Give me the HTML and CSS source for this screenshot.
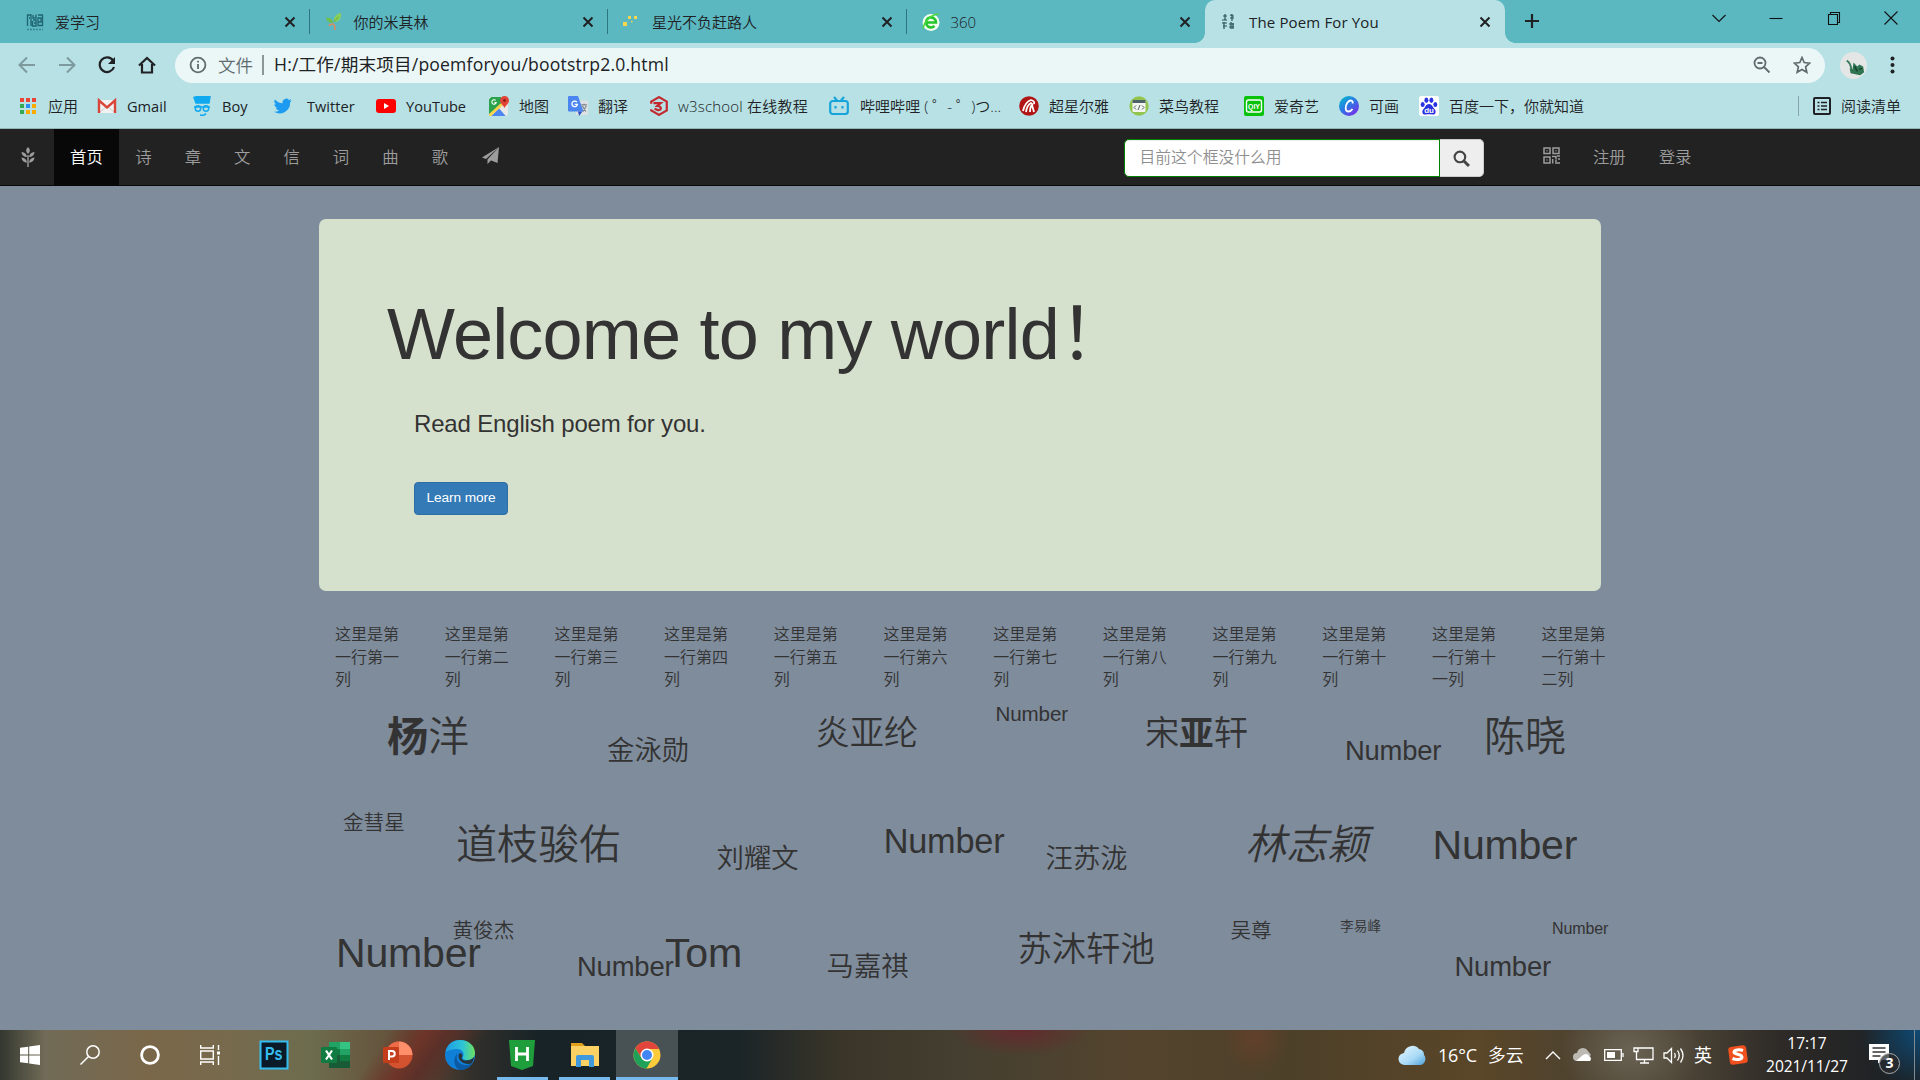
FILE: index.html
```html
<!DOCTYPE html>
<html lang="zh-CN">
<head>
<meta charset="utf-8">
<title>The Poem For You</title>
<link rel="stylesheet" href="styles.css">
</head>
<body>
<header class="tabs">
  <div class="tab"><svg class="fav" viewBox="0 0 18 18" fill="none" stroke="#1f6470" stroke-width="1.3"><path d="M1.500 13V2H5v11M3 5h1M7 2v3h3V1.500M7 7h3v6H6.500V8M8 10h2M12 2h4.500v10.500H12V5h3v4h-3"/><path d="M1 16.500h16" stroke-dasharray="2 1" opacity=".6"/></svg><span>爱学习</span><svg class="close" viewBox="0 0 12 12"><path d="M1.500 1.500l9 9M10.500 1.500l-9 9"/></svg></div>
  <div class="tab"><svg class="fav" viewBox="0 0 18 20"><path d="M9 10C8 4 12 1 17 0c0 6-2 10-8 10z" fill="#8bd05a"/><path d="M8 11C7 6 4 5 0 5c1 4 3 6 8 6z" fill="#6cbf4d"/><path d="M3 14c5-3 7-3 7 5" fill="none" stroke="#e08a5e" stroke-width="1.800"/><path d="M9 10l5-6" stroke="#5aa83c"/></svg><span>你的米其林</span><svg class="close" viewBox="0 0 12 12"><path d="M1.500 1.500l9 9M10.500 1.500l-9 9"/></svg></div>
  <div class="tab"><svg class="fav" viewBox="0 0 18 18" fill="#f6d64a"><path d="M0 9h4v4H0zM5 3h3v3H5zM11 3h3v3h-3zM8 8h1.500v1.500H8z"/></svg><span>星光不负赶路人</span><svg class="close" viewBox="0 0 12 12"><path d="M1.500 1.500l9 9M10.500 1.500l-9 9"/></svg></div>
  <div class="tab last"><svg class="fav" viewBox="0 0 18 18"><circle cx="9" cy="9.500" r="8.500" fill="#f2fff0"/><path d="M4 9.500h10a5 5 0 1 0-1.500 3.500" fill="none" stroke="#25c52b" stroke-width="2.600"/><path d="M1 16C2 9 9 1 17 1" fill="none" stroke="#4ad83c" stroke-width="1.500"/></svg><span>360</span><svg class="close" viewBox="0 0 12 12"><path d="M1.500 1.500l9 9M10.500 1.500l-9 9"/></svg></div>
  <div class="tab active"><svg class="fav" viewBox="0 0 18 18" fill="none" stroke="#2a5358" stroke-width="1.200"><path d="M3 3h4M5 1v6M2 7h5M10 2l4 1M10 5h4M12 1v7M2 10h5M4 9v7M3 13h4M9 11h5M11 9v7M9 14h5M13 10v6"/></svg><span>The Poem For You</span><svg class="close" viewBox="0 0 12 12"><path d="M1.500 1.500l9 9M10.500 1.500l-9 9"/></svg></div>
  <svg class="plus" viewBox="0 0 16 16"><path d="M8 1v14M1 8h14"/></svg>
  <div class="winctl">
    <svg viewBox="0 0 14 14"><path d="M.5 4l6.500 6.500L13.500 4"/></svg>
    <svg viewBox="0 0 14 14"><path d="M.5 7.500h13"/></svg>
    <svg viewBox="0 0 14 14"><path d="M1.500 3.500h9v10h-9zM3.500 3.500v-2h9v10h-2"/></svg>
    <svg viewBox="0 0 14 14"><path d="M.5.5l13 13M13.500.5l-13 13"/></svg>
  </div>
</header>

<div class="toolbar">
  <svg class="tool dim" viewBox="0 0 18 18"><path d="M17 9H2M9 1.500L1.500 9 9 16.500"/></svg>
  <svg class="tool dim" viewBox="0 0 18 18"><path d="M1 9h15M9 1.500L16.500 9 9 16.500"/></svg>
  <svg class="tool" viewBox="0 0 18 18"><path d="M15 4.500A7.300 7.300 0 1 0 16 11" stroke-width="2.200"/><path d="M17 1v7h-7z" fill="#202124" stroke="none"/></svg>
  <svg class="tool" viewBox="0 0 18 18"><path d="M1 9.500L9 2l8 7.500M4 8v8.500h10V8" stroke-width="2.200"/></svg>
  <div class="omnibox">
    <svg class="info" viewBox="0 0 18 18" fill="none" stroke="#5f6b6e" stroke-width="1.800"><circle cx="9" cy="9" r="7.400"/><path d="M9 8v5M9 4.800v1.800"/></svg>
    <span class="scheme">文件</span>
    <span class="url">H:/工作/期末项目/poemforyou/bootstrp2.0.html</span>
    <svg class="mag" viewBox="0 0 18 18" fill="none" stroke="#5f6b6e" stroke-width="1.800"><circle cx="7" cy="7" r="5.500"/><path d="M11 11l5.500 5.500M4.500 7h5"/></svg>
    <svg class="star" viewBox="0 0 18 18" fill="none" stroke="#5f6b6e" stroke-width="1.700"><path d="M9 1.500l2.200 5 5.500.6-4.100 3.700 1.200 5.500L9 13.500l-4.800 2.800 1.200-5.500L1.300 7.100l5.500-.6z"/></svg>
  </div>
  <svg class="avatar" viewBox="0 0 28 28"><circle cx="14" cy="14" r="14" fill="#e4e6e5"/><path d="M7 9q4 2 5 10" fill="none" stroke="#3c7a5c" stroke-width="2"/><path d="M11 22l-1-5 3 1 1-7 4 4 2-2 4 2 1 6-4 3z" fill="#2f7553"/><path d="M15 15l3 5M20 18l3-1" stroke="#163f2c" stroke-width="1.500"/></svg>
  <svg class="dots" viewBox="0 0 4 18" fill="#202124"><circle cx="2" cy="2.500" r="2"/><circle cx="2" cy="9" r="2"/><circle cx="2" cy="15.500" r="2"/></svg>
</div>

<div class="bookmarks">
  <div class="bm"><svg viewBox="0 0 18 18"><path d="M1 1h4v4H1zM7 1h4v4H7zM13 1h4v4h-4z" fill="#ea4335"/><path d="M1 7h4v4H1zM1 13h4v4H1z" fill="#34a853"/><path d="M7 7h4v4H7z" fill="#2a8cf4"/><path d="M13 7h4v4h-4zM7 13h4v4H7zM13 13h4v4h-4z" fill="#f9ab00"/></svg><span>应用</span></div>
  <div class="bm g"><svg viewBox="0 0 20 18"><path d="M1 3h18v13H1z" fill="#f1f1f1"/><path d="M3 15l6-5M17 15l-6-5" stroke="#ccc"/><path d="M2 16V3.500l8 7 8-7V16" fill="none" stroke="#d9453a" stroke-width="2.400"/></svg><span>Gmail</span></div>
  <div class="bm boy"><svg viewBox="0 0 18 20" fill="none" stroke="#10a9f0" stroke-width="1.500"><path d="M1 1.500Q8-1 17 .500L16 7H3z" fill="#10a9f0"/><path d="M1 11h16"/><circle cx="5" cy="12.500" r="2.700"/><circle cx="13" cy="12.500" r="2.700"/><path d="M7 19q4 1 6-1.500"/></svg><span>Boy</span></div>
  <div class="bm t"><svg viewBox="0 0 24 24" fill="#1d9bf0"><path d="M23.600 4.600a9.700 9.700 0 0 1-2.800.8 4.900 4.900 0 0 0 2.200-2.700 9.800 9.800 0 0 1-3.100 1.200 4.900 4.900 0 0 0-8.400 4.500A14 14 0 0 1 1.300 3.200a4.900 4.900 0 0 0 1.500 6.600 4.900 4.900 0 0 1-2.200-.6 4.900 4.900 0 0 0 4 4.900 5 5 0 0 1-2.300.1 4.900 4.900 0 0 0 4.600 3.400A9.900 9.900 0 0 1 0 19.600a14 14 0 0 0 21.500-12.400 10 10 0 0 0 2.100-2.600z"/></svg><span>Twitter</span></div>
  <div class="bm y"><svg viewBox="0 0 20 18"><rect y="2" width="20" height="14" rx="3" fill="#f00"/><path d="M8 6l5 3-5 3z" fill="#fff"/></svg><span>YouTube</span></div>
  <div class="bm"><svg viewBox="0 0 18 18"><rect x="0" y="1" width="17" height="17" rx="2" fill="#e8e8e8"/><path d="M0 18V3l2-2h9v6z" fill="#2ba24c"/><path d="M2 18l7-7 6 7z" fill="#4b86f0"/><path d="M0 18L13 6" stroke="#fbd34b" stroke-width="2.500"/><path d="M14 11c-1-3-4-4-4-7a4 4 0 0 1 8 0c0 3-3 4-4 7z" fill="#e04437"/><circle cx="14" cy="4" r="1.300" fill="#8d1b15"/><path d="M6 4a2 2 0 1 0 .5 2H4.800" fill="none" stroke="#fff"/></svg><span>地图</span></div>
  <div class="bm"><svg viewBox="0 0 18 18"><rect x="7" y="4" width="11" height="13" rx="1" fill="#dde1e4"/><path d="M0 1q0-1 1-1h8l5 14H1q-1 0-1-1z" fill="#4b86f0"/><path d="M9 14h4l-3 4z" fill="#2b4fbb"/><path d="M8 5.500a2.500 2.500 0 1 0 .5 2H6" fill="none" stroke="#fff" stroke-width="1.200"/><path d="M12 8h5M14.500 7v1M13 9l3 5M16.500 9l-3 5" stroke="#78838a" fill="none"/></svg><span>翻译</span></div>
  <div class="bm"><svg viewBox="0 0 18 18" fill="none" stroke="#c4292f" stroke-width="2"><path d="M2 7V5l7-4 7 4v8l-7 4-7-4v-1M4 6.500h6.500L7.500 9c4.500 0 4 4.500 0 3.500L5 11.500"/></svg><span class="w3">w3school 在线教程</span></div>
  <div class="bm b"><svg viewBox="0 0 20 20" fill="none" stroke="#16a4da" stroke-width="2.200"><rect x="1.200" y="5" width="17.600" height="13" rx="2.500"/><path d="M5 1l3 3.500M15 1l-3 3.500M6.500 10v2.500M13.500 10v2.500"/></svg><span>哔哩哔哩 ( ゜- ゜)つ...</span></div>
  <div class="bm"><svg viewBox="0 0 20 20"><circle cx="10" cy="10" r="9.800" fill="#b01414"/><path d="M4 15Q6 6 12 4q4 1 3 4M7 16q1-7 5-9l2 2M11 16q0-5 2-7l2 7" fill="none" stroke="#fff" stroke-width="1.800"/></svg><span>超星尔雅</span></div>
  <div class="bm"><svg viewBox="0 0 20 20"><circle cx="10" cy="10" r="9.700" fill="#93c54e"/><rect x="3.500" y="4" width="13" height="12" rx="1" fill="#f3f5ee"/><path d="M3.500 4h13v3h-13z" fill="#4c6268"/><path d="M7 9.500L5 11.500l2 2M13 9.500l2 2-2 2M11 9l-2 5" fill="none" stroke="#4c6268"/></svg><span>菜鸟教程</span></div>
  <div class="bm"><svg viewBox="0 0 20 20"><rect width="20" height="20" rx="2" fill="#08c20b"/><rect x="2.500" y="4" width="15" height="12" rx="2" fill="none" stroke="#fff" stroke-width="1.400"/><text x="4" y="13" font-size="8" font-weight="700" fill="#fff" textLength="12" lengthAdjust="spacingAndGlyphs">QIY</text></svg><span>爱奇艺</span></div>
  <div class="bm"><svg viewBox="0 0 20 20"><defs><linearGradient id="cv" x2=".8" y2="1"><stop stop-color="#00c4cc"/><stop offset=".5" stop-color="#2a78e4"/><stop offset="1" stop-color="#7d2ae8"/></linearGradient></defs><circle cx="10" cy="10" r="10" fill="url(#cv)"/><path d="M13.500 7.500C14.500 4 11 3.500 8.500 6.500c-2.500 3.500-2.500 9 .5 9 2 .2 3.500-1 4.500-2.500" fill="none" stroke="#fff" stroke-width="1.800"/></svg><span>可画</span></div>
  <div class="bm"><svg viewBox="0 0 20 20"><rect width="20" height="20" rx="2" fill="#fff"/><g fill="#2932e1"><ellipse cx="3.700" cy="8.500" rx="2" ry="2.500"/><ellipse cx="7.400" cy="4.300" rx="2" ry="2.700"/><ellipse cx="12.400" cy="4.300" rx="2" ry="2.700"/><ellipse cx="16.300" cy="8.500" rx="2" ry="2.500"/><path d="M10 8c3 0 3.500 3 5.500 5s1.500 6-2 5.500c-3-.5-4-.5-7 0-3.500.5-4-3.500-2-5.500S7 8 10 8z"/></g><text x="5.200" y="17" font-size="8" font-weight="700" fill="#fff">du</text></svg><span>百度一下，你就知道</span></div>
  <div class="bm list"><svg viewBox="0 0 18 18" fill="none" stroke="#202124" stroke-width="2"><rect x="1" y="1" width="16" height="16" rx="1"/><path d="M4.500 5.500h2M8 5.500h6M4.500 9h2M8 9h6M4.500 12.500h2M8 12.500h6" stroke-width="1.600"/></svg><span>阅读清单</span></div>
</div>

<nav class="navbar">
  <a class="brand"><svg viewBox="0 0 14 20" fill="#9d9d9d"><path d="M7 0c2.500 2.500 2.500 4.500 0 7-2.500-2.500-2.500-4.500 0-7zM.5 5c3.500.5 5 2 5.500 5C3 10 .8 8.500.5 5zM13.500 5C10 5.500 8.500 7 8 10c3 0 5.200-1.500 5.500-5zM.5 10.500c3.500.5 5 2 5.500 5-3 0-5.200-1.500-5.500-5zM13.500 10.500c-3.500.5-5 2-5.500 5 3 0 5.200-1.500 5.500-5zM6.300 8h1.400v12H6.300z"/></svg></a>
  <a class="item on">首页</a><a class="item">诗</a><a class="item">章</a><a class="item">文</a><a class="item">信</a><a class="item">词</a><a class="item">曲</a><a class="item">歌</a>
  <a class="item"><svg class="plane" viewBox="0 0 17 17" fill="#9d9d9d"><path d="M17 0L0 10.500l4 1.500zM17 0L5.500 12.500V17l3-3zM17 0L8 13l7.500 3z"/></svg></a>
  <form class="search"><input type="text" placeholder="目前这个框没什么用"><button type="button"><svg viewBox="0 0 16 16" fill="none" stroke="#444"><circle cx="6.500" cy="6.500" r="5" stroke-width="2"/><path d="M10.300 10.300L15 15" stroke-width="2.800"/></svg></button></form>
  <a class="item qr"><svg viewBox="0 0 17 17" fill="none" stroke="#9d9d9d" stroke-width="1.500"><path d="M1 1h6v5.500H1zM10 1h6v5.500h-6zM1 10h6v6H1zM3.500 3.700h1M12.500 3.700h1M3.500 13h1M9 9.500h4v3M14 9h3M16 11v2M9.700 12v4.500M12 16h5M12 14h2"/></svg></a>
  <a class="item">注册</a><a class="item">登录</a>
</nav>

<main class="page">
  <section class="jumbo">
    <h1>Welcome to my world！</h1>
    <p>Read English poem for you.</p>
    <a class="btn">Learn more</a>
  </section>
  <section class="cols">
    <div>这里是第一行第一列</div><div>这里是第一行第二列</div><div>这里是第一行第三列</div><div>这里是第一行第四列</div><div>这里是第一行第五列</div><div>这里是第一行第六列</div><div>这里是第一行第七列</div><div>这里是第一行第八列</div><div>这里是第一行第九列</div><div>这里是第一行第十列</div><div>这里是第一行第十一列</div><div>这里是第一行第十二列</div>
  </section>
  <section class="names r1">
    <span class="h1"><b>杨</b>洋</span><span class="h3">金泳勋</span><span class="h2">炎亚纶</span><span class="h4 en">Number</span><span class="h2">宋<b>亚</b>轩</span><span class="h3 en">Number</span><span class="h1">陈晓</span>
  </section>
  <section class="names r2">
    <span class="h4">金彗星</span><span class="h1">道枝骏佑</span><span class="h3">刘耀文</span><span class="h2 en">Number</span><span class="h3">汪苏泷</span><span class="h1"><i>林志颖</i></span><span class="h1 en">Number</span>
  </section>
  <section class="names r3">
    <span class="h1 en">Number</span><span class="h4">黄俊杰</span><span class="h3 en">Number</span><span class="h1 en">Tom</span><span class="h3">马嘉祺</span><span class="h2">苏沐轩池</span><span class="h4">吴尊</span><span class="h6">李易峰</span><span class="h3 en">Number</span><span class="h5 en">Number</span>
  </section>
</main>

<footer class="taskbar">
  <div class="apps">
    <div class="app"><svg viewBox="0 0 20 20" fill="#fff"><path d="M0 2.800l8.200-1.100v7.800H0zM9.200 1.500L20 0v9.500H9.200zM0 10.500h8.200v7.800L0 17.200zM9.200 10.500H20V20L9.200 18.500z"/></svg></div>
    <div class="app"><svg viewBox="0 0 20 20" fill="none" stroke="#fff" stroke-width="1.500"><circle cx="13" cy="7" r="6.200"/><path d="M8.500 11.500L.5 19.500"/></svg></div>
    <div class="app"><svg viewBox="0 0 20 20" fill="none" stroke="#fff" stroke-width="2.800"><circle cx="10" cy="10" r="8.400"/></svg></div>
    <div class="app gap"><svg viewBox="0 0 20 20" fill="none" stroke="#fff" stroke-width="1.400"><path d="M.7 0v3h12.600V0M.7 20v-3h12.600v3M.7 6h12.600v8H.7zM18.500 0v5M18.500 11v9"/><path d="M17 6.500h3v3h-3z" fill="#fff" stroke="none"/></svg></div>
    <div class="app big"><svg viewBox="0 0 30 30"><rect x="1.500" y="1.500" width="27" height="27" fill="#0b1a28" stroke="#35bdf0" stroke-width="2"/><text x="6" y="20" font-size="18" font-weight="700" fill="#35bdf0" textLength="17.500" lengthAdjust="spacingAndGlyphs">Ps</text></svg></div>
    <div class="app big"><svg viewBox="0 0 30 30"><path d="M8 2h21v26H8z" fill="#21a366"/><path d="M19 2h10v7H19z" fill="#33c481"/><path d="M8 9h11v6H8z" fill="#107c41"/><path d="M8 15h11v6H8z" fill="#185c37"/><path d="M19 15h10v6H19z" fill="#107c41"/><path d="M8 21h21v7H8z" fill="#185c37"/><rect y="7" width="16" height="16" rx="1" fill="#107c41"/><path d="M5 10.500l6 9M11 10.500l-6 9" stroke="#fff" stroke-width="2.200"/></svg></div>
    <div class="app big"><svg viewBox="0 0 30 30"><circle cx="16" cy="15" r="13.500" fill="#d35230"/><path d="M2.500 15A13.500 13.500 0 0 1 16 1.500V15z" fill="#ed6c47"/><path d="M16 1.500A13.500 13.500 0 0 1 29.500 15H16z" fill="#ff8f6b"/><rect y="7" width="16" height="16" rx="1" fill="#c43e1c"/><path d="M6 20v-9h3a2.700 2.700 0 0 1 0 5.500H6" fill="none" stroke="#fff" stroke-width="2"/></svg></div>
    <div class="app big"><svg viewBox="0 0 30 30"><defs><linearGradient id="eg" x2="1"><stop stop-color="#1d9be8"/><stop offset=".6" stop-color="#2fc6d4"/><stop offset="1" stop-color="#6ee05c"/></linearGradient></defs><circle cx="15" cy="15" r="15" fill="#0f7fd8"/><path d="M.5 12C2 4 8 0 15 0c9 0 15 6 15 13 0 5-4 7-8 7-3 0-5-1-4-3 2-4-1-8-6-8-4 0-8 1-11.500 3z" fill="url(#eg)"/><path d="M13 13c-3 4-1 11 6 12 3 .5 6-.5 8-1.500C24 28 20 30 15 30 9 28 7 18 13 13z" fill="#0c59a4"/><path d="M17 17c-1 2 1 3.500 4 3.500 3 0 6-1 8-3.500-.5 3-1.200 5-2.500 6.500C20 25 13 22 13.500 15c1-3 5-2 3.500 2z" fill="#26343a"/></svg></div>
    <div class="app big run"><svg viewBox="0 0 30 30"><path d="M2 0h26l-2 26-11 4-11-4z" fill="#1e9f3c"/><path d="M9.500 7v14M20.500 7v14M9.500 14h11" stroke="#fff" stroke-width="2.800"/></svg></div>
    <div class="app big run"><svg viewBox="0 0 30 30"><path d="M1 3h11l3 3v4H1z" fill="#e0a21b"/><path d="M1 6h28v20H1z" fill="#fbd263"/><path d="M6 27V17q0-2 2-2h14q2 0 2 2v10h-5v-7h-8v7z" fill="#3f99dc"/></svg></div>
    <div class="app big now"><svg viewBox="0 0 30 30"><circle cx="15" cy="15" r="13.500" fill="#fbcb3c"/><path d="M15 9h12a13.500 13.500 0 0 0-23.700-.7L9.500 18z" fill="#e0443a"/><path d="M3.300 8.300A13.500 13.500 0 0 0 14.500 28.500L20.500 18l-5.500 3-5.500-3z" fill="#1fa15a"/><circle cx="15" cy="15" r="6.500" fill="#fff"/><circle cx="15" cy="15" r="5" fill="#4285f4"/></svg></div>
  </div>
  <div class="tray">
    <svg width="28" height="22" viewBox="0 0 28 22"><defs><linearGradient id="cl" x2="1" y2="1"><stop stop-color="#e6f7ff"/><stop offset=".6" stop-color="#a9daf6"/><stop offset="1" stop-color="#4d9fd8"/></linearGradient></defs><path d="M7 21a6 6 0 0 1-1-12A8.500 8.500 0 0 1 21 5a6 6 0 0 1 5 6c3 3 1 10-4 10z" fill="url(#cl)"/></svg>
    <span class="weather">16°C<em>多云</em></span>
    <svg width="16" height="10" viewBox="0 0 16 10" fill="none" stroke="#fff" stroke-width="1.400"><path d="M1 9l7-7 7 7"/></svg>
    <svg width="21" height="14" viewBox="0 0 21 14"><path d="M4 13a4 4 0 0 1 0-8 6 6 0 0 1 11-2l3 4-8 6z" fill="#bdbab4"/><path d="M3 13l7-6c3-2 5-1 6 1a3 3 0 0 1 1 5z" fill="#fff"/></svg>
    <svg width="20" height="12" viewBox="0 0 20 12" fill="none" stroke="#fff" stroke-width="1.300"><path d="M.7.7h16.600v10.600H.7zM19 4v4"/><path d="M3 3h8v6H3z" fill="#fff" stroke="none"/></svg>
    <svg width="21" height="17" viewBox="0 0 21 17" fill="none" stroke="#fff" stroke-width="1.300"><path d="M5 1h15v11.500H3.500V5M1 1h4v3.500H1zM11.500 12.500V16M7 16h9"/></svg>
    <svg width="21" height="17" viewBox="0 0 21 17" fill="none" stroke="#fff" stroke-width="1.300"><path d="M1 6h3l4.500-4.500v14L4 11H1zM11.500 6q1.500 2.500 0 5M14.500 3.500q3.500 5 0 10M17.500 1.500q5 7 0 14"/></svg>
    <span class="ime">英</span>
    <svg width="20" height="20" viewBox="0 0 20 20"><rect x="1" y="1" width="18" height="18" rx="3" fill="#f0501e" transform="rotate(-8 10 10)"/><path d="M15 5.500c-4-1.500-9-.5-9 1.800C6 9.500 14 9 14 12c0 3-6 3-9.500 1.500" fill="none" stroke="#fff" stroke-width="3"/></svg>
    <span class="clock">17:17<br>2021/11/27</span>
    <div class="notice"><svg width="20" height="20" viewBox="0 0 20 20"><path d="M0 0h20v16h-7l-4 3.500V16H0z" fill="#fff"/><path d="M3.500 4h13M3.500 8h13M3.500 12h8" stroke="#333" stroke-width="1.400"/></svg><span class="badge">3</span></div>
    <div class="edge"></div>
  </div>
</footer>
</body>
</html>
```
FILE: styles.css
```css
* { box-sizing: border-box; }
body {
  margin: 0;
  width: 1920px;
  height: 1080px;
  overflow: hidden;
  display: flex;
  flex-direction: column;
  background: #7f8c9b;
  font-family: "Liberation Sans", "Noto Sans CJK SC", sans-serif;
  color: #333;
}
svg { display: block; flex: none; }
svg text { font-family: "Liberation Sans", sans-serif; }

/* tab strip */
.tabs, .toolbar, .bookmarks, .tray {
  font-family: "Open Sans", "Noto Sans CJK SC", sans-serif;
  font-weight: 350;
  color: #202124;
}
.tabs {
  height: 43px;
  flex: none;
  display: flex;
  align-items: stretch;
  background: #5bb8c1;
  padding-left: 11px;
}
.tab {
  position: relative;
  width: 298.5px;
  display: flex;
  align-items: center;
  padding: 0 14px 0 15px;
  font-size: 15px;
}
.tab::after {
  content: "";
  position: absolute;
  right: 0;
  top: 9px;
  width: 1px;
  height: 25px;
  background: #2f7780;
}
.tab.last::after { display: none; }
.tab span { flex: 1; }
.fav { width: 18px; height: 18px; margin-right: 11px; }
.close { width: 12px; height: 12px; fill: none; stroke: #202124; stroke-width: 2; }
.tab.active {
  background: #b7e1e4;
  border-radius: 10px 10px 0 0;
  width: 300px;
  font-weight: 400;
  font-size: 15px;
  letter-spacing: .15px;
}
.tab.active::before, .tab.active::after {
  content: "";
  position: absolute;
  top: auto;
  bottom: 0;
  width: 10px;
  height: 10px;
}
.tab.active::before { left: -10px; background: radial-gradient(circle at 0 0, transparent 9.5px, #b7e1e4 10px); }
.tab.active::after { right: -10px; background: radial-gradient(circle at 100% 0, transparent 9.5px, #b7e1e4 10px); }
.plus { width: 16px; height: 16px; margin: 13px 0 0 19px; fill: none; stroke: #202124; stroke-width: 2.2; }
.winctl { margin-left: auto; display: flex; gap: 43.3px; padding: 11px 22px 0 0; }
.winctl svg { width: 14px; height: 14px; fill: none; stroke: #111; stroke-width: 1.1; }

/* toolbar */
.toolbar { height: 45px; flex: none; display: flex; align-items: center; background: #b7e1e4; padding: 0 25px 1px 18px; }
.tool { width: 18px; height: 18px; margin-right: 22px; fill: none; stroke: #202124; stroke-width: 2; }
.tool.dim { stroke: #7d9a9e; }
.omnibox {
  width: 1650px;
  height: 35px;
  margin-left: -3px;
  border-radius: 18px;
  background: #ebf7f7;
  display: flex;
  align-items: center;
  padding: 0 14px;
  font-size: 17.6px;
}
.info { width: 18px; height: 18px; }
.scheme { margin-left: 11px; padding-right: 8px; border-right: 2px solid #8c9698; color: #5f6b6e; line-height: 20px; width: 46px; white-space: nowrap; }
.url { margin-left: 10px; flex: 1; color: #202124; font-weight: 400; letter-spacing: .17px; line-height: 33px; padding-bottom: 1px; }
.mag { width: 18px; height: 18px; margin-right: 22px; }
.star { width: 18px; height: 18px; }
.avatar { width: 27px; height: 27px; margin-left: 15px; }
.dots { width: 5px; height: 18px; margin-left: auto; }

/* bookmarks */
.bookmarks {
  height: 41px;
  flex: none;
  display: grid;
  grid-template-columns: 78px 95px 82px 102px 113px 79px 81px 180px 190px 110px 115px 95px 80px 379px 1fr;
  align-items: center;
  background: #b7e1e4;
  border-bottom: 1px solid #93b6b9;
  padding: 0 0 4px 19px;
  font-size: 15px;
}
.bm { display: flex; align-items: center; white-space: nowrap; }
.bm svg { width: 20px; height: 20px; margin-right: 10px; }
.bm:first-child svg { width: 18px; height: 18px; margin-right: 11px; }
.bm span { padding-bottom: 1px; }
.bm.g, .bm.y, .bm.t, .bm.boy { font-weight: 400; font-size: 14.6px; }
.bm.g svg { margin-right: 10px; }
.bm.t svg { width: 18px; margin-right: 15px; }
.bm.y svg { margin-right: 10px; }
.bm.b svg { margin-right: 11px; }
.w3 { letter-spacing: .2px; margin-left: -1px; }
.bm.b span { letter-spacing: .05px; }
.bm.list { border-left: 1px solid #86a6a9; height: 20px; padding-left: 14px; }
.bm.list svg { width: 18px; height: 18px; }

/* site navbar */
.navbar {
  height: 57px;
  flex: none;
  display: flex;
  align-items: stretch;
  background: #222;
  border-bottom: 1px solid #080808;
  padding-right: 212px;
  font-size: 16.4px;
  font-weight: 350;
  color: #9d9d9d;
}
.brand { width: 54px; display: flex; align-items: center; justify-content: center; padding-left: 2px; }
.brand svg { width: 14px; height: 20px; }
.item { padding: 0 16.5px 3px; display: flex; align-items: center; }
.item.on { background: #080808; color: #fff; padding: 0 16px 3px; }
.plane, .qr svg { width: 17px; height: 17px; margin-top: -1px; }
.plane { margin-left: 1px; }
.search { margin-left: auto; margin-top: 10px; display: flex; width: 360px; height: 38px; }
.search input {
  flex: 1;
  min-width: 0;
  border: 1px solid #008000;
  border-radius: 5px 0 0 5px;
  padding: 0 14px;
  background: #fff;
  font: inherit;
  font-size: 15.8px;
  box-shadow: inset 0 1px 1px rgba(0,0,0,.075);
}
.search input::placeholder { color: #8f8f8f; opacity: 1; }
.search button {
  width: 44px;
  border: 1px solid #ccc;
  border-left: 0;
  border-radius: 0 5px 5px 0;
  background: #eee;
  display: flex;
  align-items: center;
  justify-content: center;
  padding: 0;
}
.search button svg { width: 17px; height: 17px; }
.qr { margin-left: 42px; }

/* page */
.page { height: 844px; flex: none; padding: 33px 0 0 319px; }
.jumbo { width: 1282px; height: 372px; background: #d6e1cd; border-radius: 7px; padding: 75px 0 0 68px; }
.jumbo h1 { margin: 0; font-size: 72px; font-weight: 400; line-height: 80px; letter-spacing: -.78px; }
.jumbo p { margin: 33px 0 0 27px; font-size: 24px; line-height: 34px; letter-spacing: -.17px; }
.btn {
  display: block;
  width: 94px;
  height: 33px;
  margin: 41px 0 0 27px;
  border: 1px solid #2e6da4;
  border-radius: 4px;
  background: #337ab7;
  color: #fff;
  font-size: 13.7px;
  letter-spacing: -.12px;
  line-height: 29px;
  text-align: center;
}
.cols {
  display: grid;
  grid-template-columns: repeat(12, 109.7px);
  margin: 33px 0 0 -1px;
  height: 66px;
  font-size: 16px;
  font-weight: 350;
  line-height: 22.6px;
}
.cols div { padding: 0 17px; }

.names { display: grid; height: 108.2px; line-height: 40px; white-space: nowrap; font-weight: 350; }
.names b { font-weight: 700; }
.r1 { margin-left: 68px; grid-template-columns: 220px 208.5px 180px 149.5px 199.9px 139.1px 1fr; }
.r2 { margin-left: 24px; grid-template-columns: 113px 260.5px 167.2px 161.8px 199.5px 187.5px 1fr; }
.r3 { margin-left: 17px; grid-template-columns: 116.5px 124.5px 88px 161.5px 191px 213px 109.5px 114.5px 97.5px 1fr; }
.h1 { font-size: 41.1px; padding-top: 26.5px; }
.h2 { font-size: 34.3px; padding-top: 22.5px; }
.h3 { font-size: 27.4px; padding-top: 41px; }
.h4 { font-size: 20.6px; padding-top: 4.4px; }
.h5 { font-size: 16px; padding-top: 2.6px; }
.h6 { font-size: 13.7px; padding-top: .4px; }
.en { letter-spacing: -.006em; }

/* taskbar */
.taskbar {
  height: 50px;
  flex: none;
  display: flex;
  justify-content: space-between;
  background:
    radial-gradient(ellipse 60px 60px at 1920px 0, #0f4a75, transparent),
    radial-gradient(ellipse 70px 26px at 1020px 0, #642a2e, transparent),
    radial-gradient(ellipse 35px 36px at 1255px 8px, #62402b, transparent),
    radial-gradient(ellipse 70px 60px at 1630px 20px, #6a6354, transparent),
    linear-gradient(125deg, transparent 320px, #6e3529 350px, #5a3028 368px, transparent 400px),
    linear-gradient(90deg, #33372f 0, #716b57 45px, #7a6749 150px, #776a4d 230px, #6d6c4e 310px, #63503a 400px, #33302b 470px, #172327 540px, #1b2528 740px, #3a3528 840px, #443f30 960px, #54442e 1130px, #4d4029 1290px, #5a4628 1480px, #4f432f 1570px, #4a4335 1690px, #2e2a27 1780px, #1c2124 1900px);
}
.apps { display: flex; }
.app { width: 60px; display: flex; align-items: center; justify-content: center; padding-bottom: 1px; }
.app.gap { margin-right: 3px; }
.app.big { width: 62.1px; }
.app svg { width: 20px; height: 20px; }
.app.big svg { width: 30px; height: 30px; }
.app.run { background: linear-gradient(#76b9ed, #76b9ed) center bottom / 51px 3px no-repeat; }
.app.now { background: linear-gradient(#76b9ed, #76b9ed) center bottom / 100% 3px no-repeat, #485154; }
.tray {
  display: grid;
  grid-template-columns: 40px 107px 28px 31px 29px 30px 31px 34px 32px 109px 45px 6px;
  align-items: center;
  color: #fff;
  font-weight: 400;
}
.weather { font-size: 18px; white-space: nowrap; letter-spacing: -.2px; padding-bottom: 2px; }
.weather em { font-style: normal; font-weight: 350; margin-left: 11px; }
.ime { font-size: 18px; padding-bottom: 2px; }
.clock { font-size: 15.6px; line-height: 23px; text-align: center; width: 94px; letter-spacing: -.1px; }
.notice { position: relative; padding-bottom: 2px; }
.badge {
  position: absolute;
  left: 10px;
  top: 9px;
  width: 21px;
  height: 21px;
  border: 1px solid #aaa;
  border-radius: 50%;
  background: rgba(40,42,44,.75);
  font: 700 14px/18px "Open Sans", sans-serif;
  text-align: center;
}
.edge { width: 1px; height: 50px; background: #7e8b93; }
```
